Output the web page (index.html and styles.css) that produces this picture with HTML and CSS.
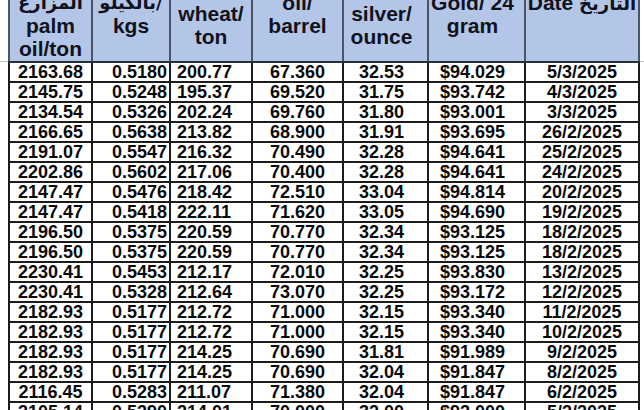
FILE: index.html
```html
<!DOCTYPE html>
<html>
<head>
<meta charset="utf-8">
<link rel="stylesheet" href="styles.css">
</head>
<body>
<div class="sheet">
<table class="prices">
<colgroup>
<col class="w1"><col class="w2"><col class="w3"><col class="w4"><col class="w5"><col class="w6"><col class="w7">
</colgroup>
<thead>
<tr class="head">
<th class="c1"><span class="ln ar">زيت النخيل/</span><span class="ln ar">المزارع</span><span class="ln">palm</span><span class="ln">oil/ton</span></th>
<th class="c2"><span class="ln ar">بالكيلو/</span><span class="ln">kgs</span></th>
<th class="c3"><span class="ln">&nbsp;</span><span class="ln">wheat/</span><span class="ln">ton</span></th>
<th class="c4"><span class="ln">oil/</span><span class="ln">barrel</span></th>
<th class="c5"><span class="ln">&nbsp;</span><span class="ln">silver/</span><span class="ln">ounce</span></th>
<th class="c6"><span class="ln">Gold/ 24</span><span class="ln">gram</span></th>
<th class="c7"><span class="ln">Date <span class="ar">التاريخ</span></span><span class="ln">&nbsp;</span></th>
</tr>
</thead>
<tbody>
<tr><td class="c1">2163.68</td><td class="c2">0.5180</td><td class="c3">200.77</td><td class="c4">67.360</td><td class="c5">32.53</td><td class="c6">$94.029</td><td class="c7">5/3/2025</td></tr>
<tr><td class="c1">2145.75</td><td class="c2">0.5248</td><td class="c3">195.37</td><td class="c4">69.520</td><td class="c5">31.75</td><td class="c6">$93.742</td><td class="c7">4/3/2025</td></tr>
<tr><td class="c1">2134.54</td><td class="c2">0.5326</td><td class="c3">202.24</td><td class="c4">69.760</td><td class="c5">31.80</td><td class="c6">$93.001</td><td class="c7">3/3/2025</td></tr>
<tr><td class="c1">2166.65</td><td class="c2">0.5638</td><td class="c3">213.82</td><td class="c4">68.900</td><td class="c5">31.91</td><td class="c6">$93.695</td><td class="c7">26/2/2025</td></tr>
<tr><td class="c1">2191.07</td><td class="c2">0.5547</td><td class="c3">216.32</td><td class="c4">70.490</td><td class="c5">32.28</td><td class="c6">$94.641</td><td class="c7">25/2/2025</td></tr>
<tr><td class="c1">2202.86</td><td class="c2">0.5602</td><td class="c3">217.06</td><td class="c4">70.400</td><td class="c5">32.28</td><td class="c6">$94.641</td><td class="c7">24/2/2025</td></tr>
<tr><td class="c1">2147.47</td><td class="c2">0.5476</td><td class="c3">218.42</td><td class="c4">72.510</td><td class="c5">33.04</td><td class="c6">$94.814</td><td class="c7">20/2/2025</td></tr>
<tr><td class="c1">2147.47</td><td class="c2">0.5418</td><td class="c3">222.11</td><td class="c4">71.620</td><td class="c5">33.05</td><td class="c6">$94.690</td><td class="c7">19/2/2025</td></tr>
<tr><td class="c1">2196.50</td><td class="c2">0.5375</td><td class="c3">220.59</td><td class="c4">70.770</td><td class="c5">32.34</td><td class="c6">$93.125</td><td class="c7">18/2/2025</td></tr>
<tr><td class="c1">2196.50</td><td class="c2">0.5375</td><td class="c3">220.59</td><td class="c4">70.770</td><td class="c5">32.34</td><td class="c6">$93.125</td><td class="c7">18/2/2025</td></tr>
<tr><td class="c1">2230.41</td><td class="c2">0.5453</td><td class="c3">212.17</td><td class="c4">72.010</td><td class="c5">32.25</td><td class="c6">$93.830</td><td class="c7">13/2/2025</td></tr>
<tr><td class="c1">2230.41</td><td class="c2">0.5328</td><td class="c3">212.64</td><td class="c4">73.070</td><td class="c5">32.25</td><td class="c6">$93.172</td><td class="c7">12/2/2025</td></tr>
<tr><td class="c1">2182.93</td><td class="c2">0.5177</td><td class="c3">212.72</td><td class="c4">71.000</td><td class="c5">32.15</td><td class="c6">$93.340</td><td class="c7">11/2/2025</td></tr>
<tr><td class="c1">2182.93</td><td class="c2">0.5177</td><td class="c3">212.72</td><td class="c4">71.000</td><td class="c5">32.15</td><td class="c6">$93.340</td><td class="c7">10/2/2025</td></tr>
<tr><td class="c1">2182.93</td><td class="c2">0.5177</td><td class="c3">214.25</td><td class="c4">70.690</td><td class="c5">31.81</td><td class="c6">$91.989</td><td class="c7">9/2/2025</td></tr>
<tr><td class="c1">2182.93</td><td class="c2">0.5177</td><td class="c3">214.25</td><td class="c4">70.690</td><td class="c5">32.04</td><td class="c6">$91.847</td><td class="c7">8/2/2025</td></tr>
<tr><td class="c1">2116.45</td><td class="c2">0.5283</td><td class="c3">211.07</td><td class="c4">71.380</td><td class="c5">32.04</td><td class="c6">$91.847</td><td class="c7">6/2/2025</td></tr>
<tr><td class="c1">2105.14</td><td class="c2">0.5290</td><td class="c3">214.01</td><td class="c4">70.000</td><td class="c5">32.00</td><td class="c6">$92.000</td><td class="c7">5/2/2025</td></tr>
</tbody>
</table>
</div>
</body>
</html>
```
FILE: styles.css
```css
html, body {
  margin: 0;
  padding: 0;
  overflow: hidden;
  width: 644px;
  height: 410px;
}
body {
  background: #ffffff linear-gradient(to bottom, transparent 61px, #c4c4c4 61px, #c4c4c4 62px, transparent 62px);
}
.sheet {
  padding-left: 8px;
  margin-top: -36px;
}
.prices {
  border-collapse: collapse;
  table-layout: fixed;
  width: 630px;
  font-family: "Liberation Sans", Arial, "DejaVu Sans", sans-serif;
  font-weight: bold;
}
.w1 { width: 83px; }
.w2 { width: 78px; }
.w3 { width: 82px; }
.w4 { width: 91px; }
.w5 { width: 85px; }
.w6 { width: 97px; }
.w7 { width: 114px; }

.head th {
  height: 95px;
  padding: 0;
  background: #b4c6e7;
  color: #10121c;
  font-size: 21px;
  vertical-align: middle;
  text-align: center;
  border: 2px solid #4a5468;
  border-bottom: 2px solid #2a2f3a;
  overflow: hidden;
}
.ln {
  display: block;
  height: 23px;
  line-height: 23px;
  white-space: nowrap;
  overflow: hidden;
}
.ar {
  font-family: "DejaVu Sans", sans-serif;
  font-size: 18px;
}
tbody td {
  height: 18px;
  padding: 0;
  font-size: 18px;
  line-height: 18px;
  color: #0a0a0a;
  background: #ffffff;
  border: 2px solid #1c1c1c;
  text-align: center;
  white-space: nowrap;
  overflow: hidden;
}
tbody td.c2 { text-align: right; padding-right: 2px; }
tbody td.c3 { text-align: left; padding-left: 6px; }
tbody td.c5 { padding-right: 8px; }
tbody td.c6 { padding-right: 8px; }
.head th.c5 { padding-right: 8px; }
.head th.c6 { padding-right: 8px; }
```
